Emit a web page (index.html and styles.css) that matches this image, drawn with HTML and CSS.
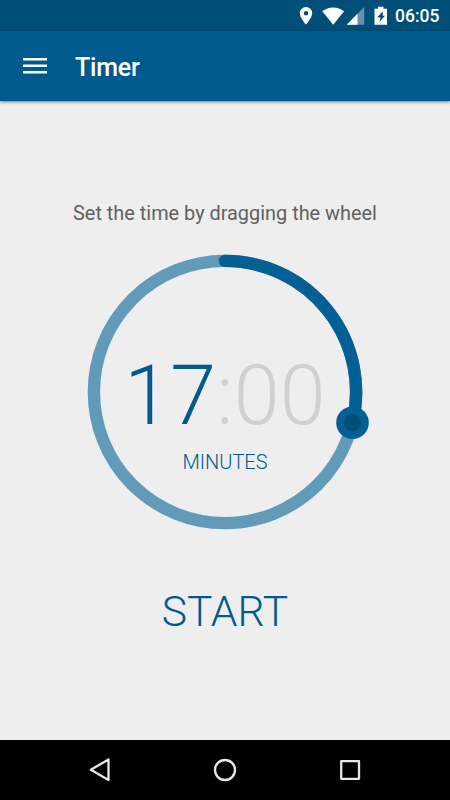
FILE: index.html
```
<!DOCTYPE html>
<html lang="en">
<head>
    <meta charset="UTF-8">
    <meta name="viewport" content="width=device-width, initial-scale=1.0">
    <title>Timer</title>
    <link rel="stylesheet" href="styles.css">
</head>
<body>
    <div class="status-bar">
        <svg class="status-icons" width="98" height="31" viewBox="0 0 98 31">
            <path fill="#fff" fill-rule="evenodd" d="M6 7a6.2 6.2 0 0 0-6.2 6.2C-.2 17.6 6 24.6 6 24.6s6.2-7 6.2-11.4A6.2 6.2 0 0 0 6 7zm0 4a2.2 2.2 0 1 1 0 4.4A2.2 2.2 0 0 1 6 11z"/>
            <path fill="#fff" d="M22.300 11.200a17.500 17.500 0 0 1 21.800 0L33.200 24.700z"/>
            <path fill="#6691ad" d="M64.200 7v17.700H46.700z"/>
            <path fill="#fff" d="M57.500 13.800v10.900H46.700z"/>
            <path fill="#fff" d="M78 6.800h5.500v2H87v16H74.500v-16H78z"/>
            <path fill="#004f79" d="M82.700 11.200v4.600h2.300l-5.800 6.500 1.600-4.900h-3.600z"/>
        </svg>
        <span class="clock">06:05</span>
    </div>

    <header class="toolbar">
        <svg width="24" height="16" viewBox="0 0 24 16">
            <path fill="#fff" d="M0 0h24v2.500H0zM0 6.500h24v2.500H0zM0 13h24v2.500H0z"/>
        </svg>
        <h1>Timer</h1>
    </header>

    <main>
        <p class="hint">Set the time by dragging the wheel</p>

        <div class="wheel">
            <svg class="ring" width="284" height="284" viewBox="-142 -142 284 284">
                <circle class="track" r="131.100"/>
                <path class="progress" d="M0-131.100A131.100 131.100 0 0 1 127.500 30.700"/>
                <circle class="handle" cx="127.500" cy="30.700" r="16.300"/>
                <circle class="handle-dot" cx="127.500" cy="30.700" r="8.700"/>
            </svg>
            <div class="readout">
                <div class="time"><span class="minutes">17</span><span class="seconds">:00</span></div>
                <div class="unit">MINUTES</div>
            </div>
        </div>

        <button type="button" class="start">START</button>
    </main>

    <!-- back, home, recents -->
    <nav class="nav-bar">
        <svg width="24" height="26" viewBox="0 0 24 26"><path d="M20.500 2.500v20.500L2.800 12.800z"/></svg>
        <svg width="24" height="26" viewBox="0 0 24 26"><circle cx="12" cy="13" r="10"/></svg>
        <svg width="24" height="26" viewBox="0 0 24 26"><rect x="3.200" y="4.200" width="17.800" height="17.600"/></svg>
    </nav>
</body>
</html>
```
FILE: styles.css
```
* { box-sizing: border-box; }
body { margin: 0; height: 800px; display: flex; flex-direction: column; overflow: hidden; background-color: #eee; font-family: Roboto, sans-serif; color: #005a8e; }

.status-bar { height: 31px; flex: none; display: flex; justify-content: flex-end; padding-right: 10px; background-color: #004f79; color: #fff; }
.status-icons { display: block; overflow: visible; }
.clock { width: 45px; margin-left: -3px; font-size: 17.5px; font-weight: 500; line-height: 33px; white-space: nowrap; }

.toolbar { height: 70px; flex: none; display: flex; align-items: center; padding: 0 23px; gap: 28px; background-color: #005a8e; color: #fff; box-shadow: 0 1px 3px rgba(0, 0, 0, 0.5); }
.toolbar h1 { margin: 2px 0 0; font-size: 25px; font-weight: 500; letter-spacing: -0.2px; }

main { flex: 1; display: flex; flex-direction: column; align-items: center; }
.hint { margin: 101px 0 0; font-size: 19.9px; line-height: 24px; color: #616161; white-space: nowrap; }

.wheel { display: grid; width: 284px; height: 284px; margin-top: 24px; }
.ring, .readout { grid-area: 1 / 1; }
.ring { overflow: visible; }
.ring circle, .ring path { stroke-width: 12.4px; fill: none; }
.ring .track { stroke: #629bba; }
.ring .progress { stroke: #046094; stroke-linecap: round; }
.ring .handle { fill: #046094; stroke: none; }
.ring .handle-dot { fill: #004f79; stroke: none; }

.readout { padding-top: 98px; text-align: center; }
.time { font-size: 82.5px; line-height: 96px; letter-spacing: 0.2px; white-space: nowrap; }
.minutes { font-weight: 300; }
.seconds { font-weight: 300; color: #d0d0d0; }
.unit { margin-top: 6px; font-size: 20px; font-weight: 300; line-height: 24px; }

.start { margin-top: 51px; padding: 0; border: none; background: none; color: #005a8e; font-family: inherit; font-size: 42.6px; font-weight: 300; line-height: 52px; cursor: pointer; }

.nav-bar { height: 60px; flex: none; display: flex; align-items: center; justify-content: center; gap: 101px; background-color: #000; }
.nav-bar svg { fill: none; stroke: #e8e8e8; stroke-width: 2.3px; stroke-linejoin: round; }
```
